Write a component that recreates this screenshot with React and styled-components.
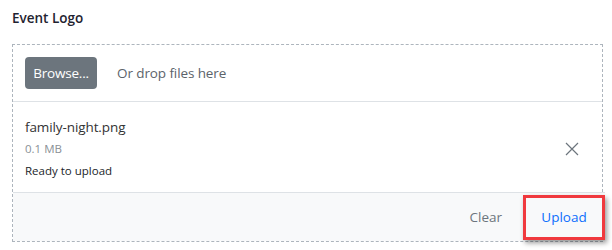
import React from "react";
import styled, { createGlobalStyle } from "styled-components";

const Global = createGlobalStyle`
  html, body { margin: 0; padding: 0; background: #fff; }
  body { font-family: "Open Sans", "Noto Sans", sans-serif; color: #212529; }
  * { box-sizing: border-box; }
`;

const Page = styled.div`
  width: 612px;
  height: 250px;
  padding: 8px 9px 0 12px;
`;

const Label = styled.div`
  font-size: 13.5px;
  line-height: 20px;
  font-weight: 600;
  color: #1f2330;
  margin-bottom: 16px;
`;

const Upload = styled.div`
  border: 1px dashed #adb5bd;
  display: flex;
  flex-direction: column;
`;

const Dropzone = styled.div`
  display: flex;
  align-items: center;
  gap: 20px;
  padding: 12px;
  border-bottom: 1px solid #dee2e6;
`;

const BrowseButton = styled.button`
  width: 72px;
  height: 32px;
  border: none;
  border-radius: 4px;
  background: #6c757d;
  color: #fff;
  font-family: inherit;
  font-size: 13.5px;
  letter-spacing: -0.2px;
  padding: 0;
  cursor: pointer;
`;

const Hint = styled.span`
  font-size: 13.5px;
  letter-spacing: -0.1px;
  color: #5c636a;
`;

const FileItem = styled.div`
  display: flex;
  align-items: center;
  padding: 15px 12px 12px 12px;
  height: 90px;
`;

const FileInfo = styled.div`
  flex: 1;
  display: flex;
  flex-direction: column;
`;

const FileName = styled.span`
  font-size: 13.5px;
  letter-spacing: -0.1px;
  line-height: 20px;
  color: #333;
`;

const FileMeta = styled.span`
  font-size: 11.5px;
  line-height: 18px;
  margin-top: ${(p) => p.$gap || 0}px;
  color: ${(p) => (p.$muted ? "#8a9096" : "#212529")};
`;

const RemoveButton = styled.button`
  border: none;
  background: transparent;
  padding: 0;
  width: 16px;
  height: 16px;
  margin-right: 10px;
  display: flex;
  align-items: center;
  justify-content: center;
  cursor: pointer;
`;

const Actions = styled.div`
  display: flex;
  justify-content: flex-end;
  align-items: center;
  gap: 9px;
  height: 49px;
  border-top: 1px solid #dee2e6;
  background: #f8f9fa;
  margin-right: -3px;
`;

const ActionButton = styled.button`
  border: ${(p) => (p.$highlight ? "3px solid #f0393e" : "none")};
  box-shadow: ${(p) => (p.$highlight ? "2px 3px 5px rgba(0,0,0,0.4)" : "none")};
  background: transparent;
  color: ${(p) => (p.$primary ? "#0d6efd" : "#6c757d")};
  font-family: inherit;
  font-size: 13.5px;
  height: ${(p) => (p.$highlight ? "45px" : "32px")};
  width: ${(p) => (p.$highlight ? "82px" : "auto")};
  padding: ${(p) => (p.$highlight ? "0" : "0 12px")};
  cursor: pointer;
`;

export default function App() {
  return (
    <>
      <Global />
      <Page>
        <Label>Event Logo</Label>
        <Upload>
          <Dropzone>
            <BrowseButton>Browse...</BrowseButton>
            <Hint>Or drop files here</Hint>
          </Dropzone>
          <FileItem>
            <FileInfo>
              <FileName>family-night.png</FileName>
              <FileMeta $muted $gap={3}>0.1 MB</FileMeta>
              <FileMeta $gap={4}>Ready to upload</FileMeta>
            </FileInfo>
            <RemoveButton aria-label="Remove">
              <svg width="14" height="14" viewBox="0 0 14 14">
                <path d="M1 1 L13 13 M13 1 L1 13" stroke="#6c757d" strokeWidth="1.2" fill="none" />
              </svg>
            </RemoveButton>
          </FileItem>
          <Actions>
            <ActionButton>Clear</ActionButton>
            <ActionButton $primary $highlight>Upload</ActionButton>
          </Actions>
        </Upload>
      </Page>
    </>
  );
}
